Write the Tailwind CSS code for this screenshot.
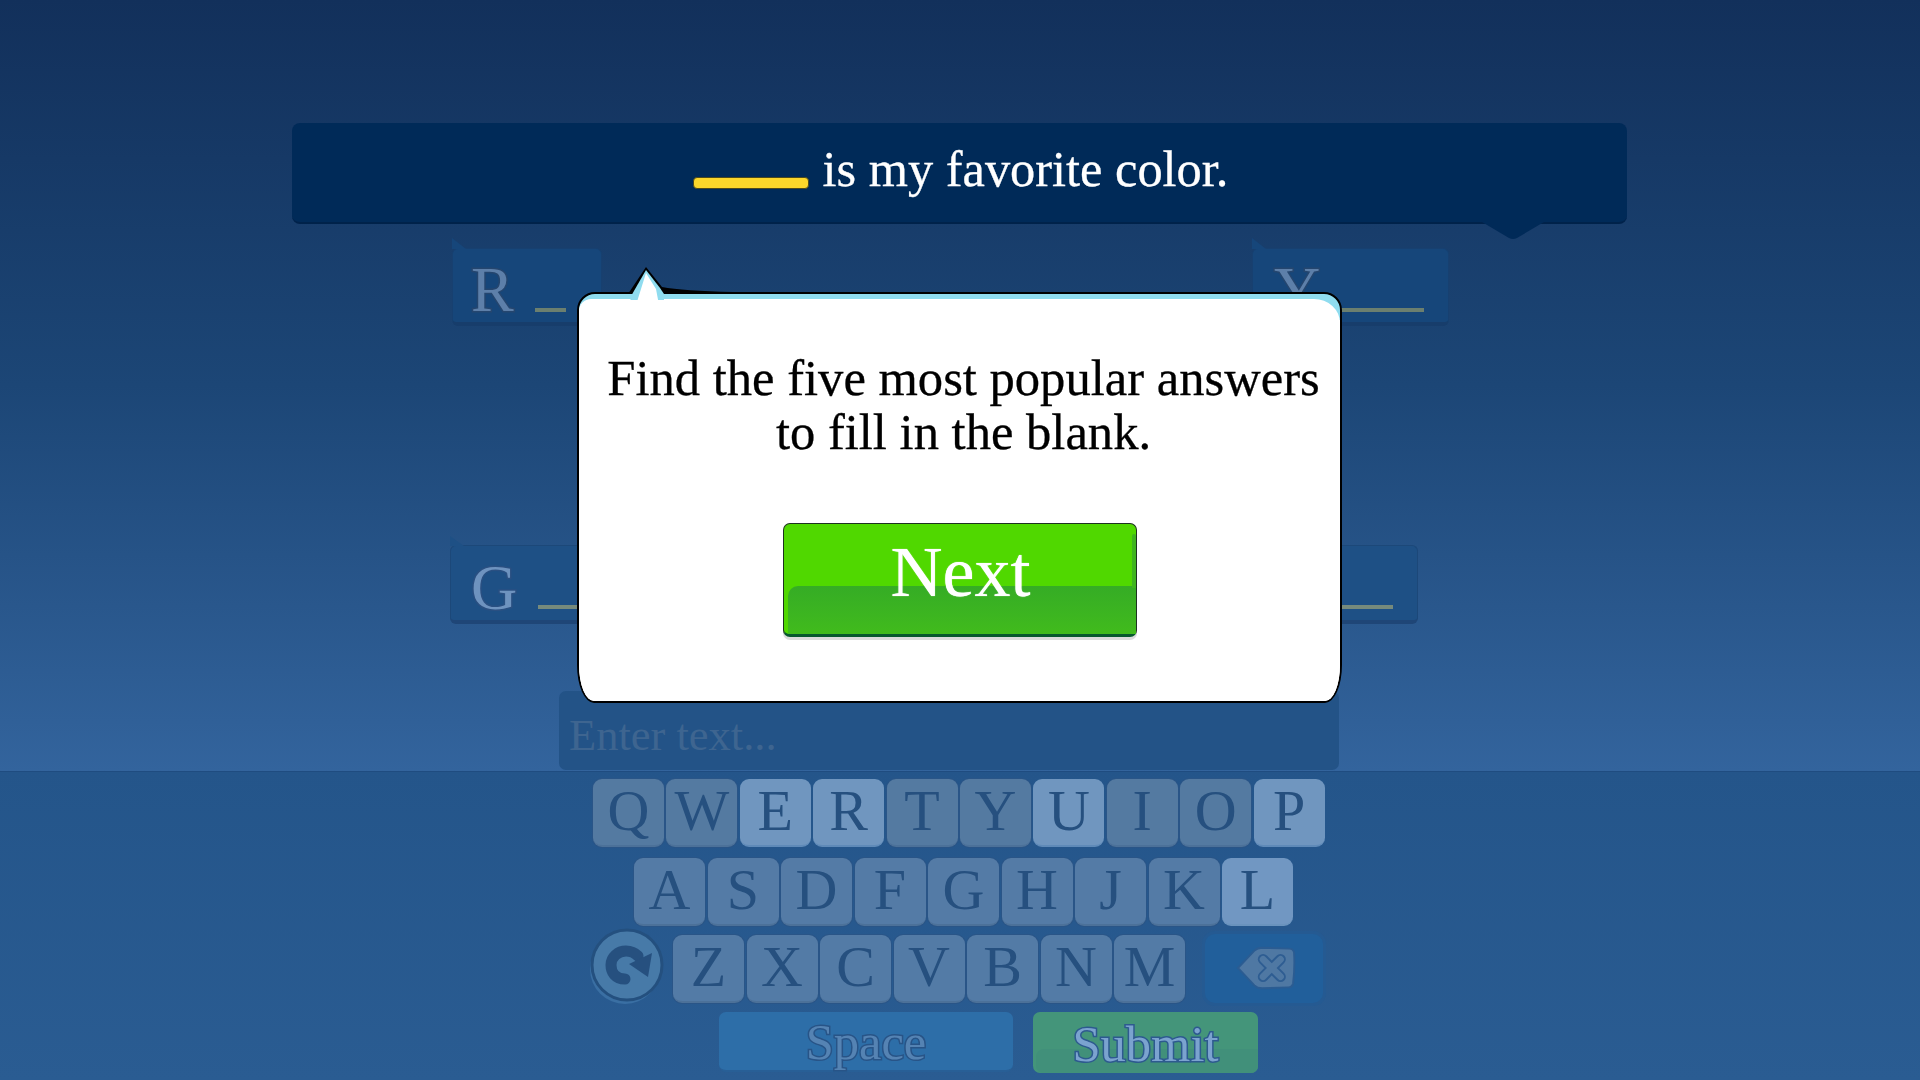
<!DOCTYPE html>
<html lang="en">
<head>
    <meta charset="UTF-8">
    <title>Fill in the blank</title>
    <script src="https://cdn.jsdelivr.net/npm/@tailwindcss/browser@4"></script>
</head>
<body class="relative h-[1080px] w-[1920px] overflow-hidden bg-[#24558a] font-['Liberation_Serif',serif]">
    <!-- play area -->
    <div class="h-[771px] bg-linear-to-b from-[#12305b] via-[#1c4676] via-50% to-[#33649d] pt-[123px]">
        <!-- question bar -->
        <div class="relative ml-[292px] flex h-[101px] w-[1335px] justify-center rounded-[8px] border-b-2 border-[#00224a] bg-[#002a58] pt-[16px] pl-[2px]">
            <div class="mt-[38px] mr-[14px] h-[12px] w-[116px] rounded-[4px] border border-[#4d4a1c] bg-[#fbd72b]"></div>
            <div class="text-[50.4px] leading-[60px] text-white [-webkit-text-stroke:0.3px_#fff]">is my favorite color.</div>
            <svg class="absolute top-[99px] left-[1190px]" width="62" height="18" viewBox="0 0 62 18"><path d="M0 0H62L35 16Q31 18 27 16Z" fill="#002a58"/></svg>
        </div>

        <!-- answers, row 1 -->
        <div class="mt-[24px] grid grid-cols-[800px_197px] pl-[452px]">
            <div class="relative flex h-[78px] w-[150px] rounded-[6px] border border-b-4 border-[#174070] border-b-[#173d6b] bg-[#16467a] pt-[9px] pl-[18px]">
                <div class="absolute -top-[11px] -left-px h-[11px] w-[14px] bg-[#16467a] [clip-path:polygon(0_0,100%_100%,0_100%)]"></div>
                <span class="text-[64px] leading-[64px] text-[#5d7fa9] [-webkit-text-stroke:3px_#25466f] [paint-order:stroke_fill]">R</span>
                <div class="mt-[50px] ml-[21px] h-[4px] w-[31px] bg-[#6b7f6f]"></div>
            </div>
            <div class="relative flex h-[78px] w-[197px] rounded-[6px] border border-b-4 border-[#174070] border-b-[#173d6b] bg-[#16467a] pt-[9px] pl-[21px]">
                <div class="absolute -top-[11px] -left-px h-[11px] w-[14px] bg-[#16467a] [clip-path:polygon(0_0,100%_100%,0_100%)]"></div>
                <span class="text-[64px] leading-[64px] text-[#5d7fa9] [-webkit-text-stroke:3px_#25466f] [paint-order:stroke_fill]">Y</span>
                <div class="mt-[50px] ml-[18px] h-[4px] w-[86px] bg-[#6b7f6f]"></div>
            </div>
        </div>

        <!-- answers, row 2 -->
        <div class="mt-[219px] flex pl-[450px]">
            <div class="relative flex h-[79px] w-[200px] rounded-[6px] border border-b-4 border-[#1c4879] border-b-[#1f4677] bg-[#1e5085] pt-[10px] pl-[20px]">
                <div class="absolute -top-[10px] -left-px h-[10px] w-[14px] bg-[#1e5085] [clip-path:polygon(0_0,100%_100%,0_100%)]"></div>
                <span class="text-[64px] leading-[64px] text-[#6e93bf] [-webkit-text-stroke:3px_#2a5082] [paint-order:stroke_fill]">G</span>
                <div class="mt-[49px] ml-[21px] h-[4px] w-[60px] bg-[#768a7c]"></div>
            </div>
            <div class="ml-[568px] flex h-[79px] w-[200px] justify-end rounded-[6px] border border-b-4 border-[#1c4879] border-b-[#1f4677] bg-[#1e5085] pt-[59px] pr-[24px]">
                <div class="h-[4px] w-[100px] bg-[#768a7c]"></div>
            </div>
        </div>

        <!-- text input -->
        <div class="mt-[67px] ml-[559px] flex h-[79px] w-[780px] items-center rounded-[7px] bg-[#235387] pt-[10px] pl-[10px] text-[44.5px] text-[#3e6590]">Enter text...</div>
    </div>

    <!-- keyboard -->
    <div class="h-[309px] border-t border-[#1f4c80] bg-linear-to-b from-[#24558a] to-[#2a5c92] pt-[7px]">
        <div class="flex gap-[2.4px] pl-[593px] text-[58px] text-[#26507f]">
            <div class="flex h-[68px] w-[71px] items-center justify-center rounded-[9px] border-b-2 border-[#4c7199] bg-[#547aa1] pb-[3px] shadow-[0_0_0_1px_#2a5587]">Q</div>
            <div class="flex h-[68px] w-[71px] items-center justify-center rounded-[9px] border-b-2 border-[#4c7199] bg-[#547aa1] pb-[3px] shadow-[0_0_0_1px_#2a5587]">W</div>
            <div class="flex h-[68px] w-[71px] items-center justify-center rounded-[9px] border-b-2 border-[#5f8ab8] bg-[#7096bf] pb-[3px]">E</div>
            <div class="flex h-[68px] w-[71px] items-center justify-center rounded-[9px] border-b-2 border-[#5f8ab8] bg-[#7096bf] pb-[3px]">R</div>
            <div class="flex h-[68px] w-[71px] items-center justify-center rounded-[9px] border-b-2 border-[#4c7199] bg-[#547aa1] pb-[3px] shadow-[0_0_0_1px_#2a5587]">T</div>
            <div class="flex h-[68px] w-[71px] items-center justify-center rounded-[9px] border-b-2 border-[#4c7199] bg-[#547aa1] pb-[3px] shadow-[0_0_0_1px_#2a5587]">Y</div>
            <div class="flex h-[68px] w-[71px] items-center justify-center rounded-[9px] border-b-2 border-[#5f8ab8] bg-[#7096bf] pb-[3px]">U</div>
            <div class="flex h-[68px] w-[71px] items-center justify-center rounded-[9px] border-b-2 border-[#4c7199] bg-[#547aa1] pb-[3px] shadow-[0_0_0_1px_#2a5587]">I</div>
            <div class="flex h-[68px] w-[71px] items-center justify-center rounded-[9px] border-b-2 border-[#4c7199] bg-[#547aa1] pb-[3px] shadow-[0_0_0_1px_#2a5587]">O</div>
            <div class="flex h-[68px] w-[71px] items-center justify-center rounded-[9px] border-b-2 border-[#5f8ab8] bg-[#7096bf] pb-[3px]">P</div>
        </div>
        <div class="mt-[11px] flex gap-[2.5px] pl-[634px] text-[58px] text-[#26507f]">
            <div class="flex h-[68px] w-[71px] items-center justify-center rounded-[9px] border-b-2 border-[#4c7199] bg-[#547ba6] pb-[3px] shadow-[0_0_0_1px_#2a5587]">A</div>
            <div class="flex h-[68px] w-[71px] items-center justify-center rounded-[9px] border-b-2 border-[#4c7199] bg-[#547ba6] pb-[3px] shadow-[0_0_0_1px_#2a5587]">S</div>
            <div class="flex h-[68px] w-[71px] items-center justify-center rounded-[9px] border-b-2 border-[#4c7199] bg-[#547ba6] pb-[3px] shadow-[0_0_0_1px_#2a5587]">D</div>
            <div class="flex h-[68px] w-[71px] items-center justify-center rounded-[9px] border-b-2 border-[#4c7199] bg-[#547ba6] pb-[3px] shadow-[0_0_0_1px_#2a5587]">F</div>
            <div class="flex h-[68px] w-[71px] items-center justify-center rounded-[9px] border-b-2 border-[#4c7199] bg-[#547ba6] pb-[3px] shadow-[0_0_0_1px_#2a5587]">G</div>
            <div class="flex h-[68px] w-[71px] items-center justify-center rounded-[9px] border-b-2 border-[#4c7199] bg-[#547ba6] pb-[3px] shadow-[0_0_0_1px_#2a5587]">H</div>
            <div class="flex h-[68px] w-[71px] items-center justify-center rounded-[9px] border-b-2 border-[#4c7199] bg-[#547ba6] pb-[3px] shadow-[0_0_0_1px_#2a5587]">J</div>
            <div class="flex h-[68px] w-[71px] items-center justify-center rounded-[9px] border-b-2 border-[#4c7199] bg-[#547ba6] pb-[3px] shadow-[0_0_0_1px_#2a5587]">K</div>
            <div class="flex h-[68px] w-[71px] items-center justify-center rounded-[9px] border-b-2 border-[#6a93bd] bg-[#7197c2] pb-[3px]">L</div>
        </div>
        <div class="mt-[9px] flex h-[68px] items-center pl-[588px] text-[58px] text-[#26507f]">
            <!-- refresh -->
            <svg class="mr-[7px] -mt-[8px] -mb-[2px] shrink-0" width="78" height="78" viewBox="0 0 78 78">
                <circle cx="37" cy="42" r="35" fill="#3a6fa3"/>
                <circle cx="39" cy="38" r="35" fill="#477aa8" stroke="#24507f" stroke-width="3"/>
                <path d="M37 52C27 52 23 45 23 38C23 30 30 24 38 24C43 24 47 26 50 29" fill="none" stroke="#26507f" stroke-width="11" stroke-linecap="round"/>
                <path d="M41 37L64 26L60 50Z" fill="#26507f"/>
            </svg>
            <div class="flex gap-[2.5px]">
                <div class="flex h-[68px] w-[71px] items-center justify-center rounded-[9px] border-b-2 border-[#4c7199] bg-[#537ba6] pb-[3px] shadow-[0_0_0_1px_#2a5587]">Z</div>
                <div class="flex h-[68px] w-[71px] items-center justify-center rounded-[9px] border-b-2 border-[#4c7199] bg-[#537ba6] pb-[3px] shadow-[0_0_0_1px_#2a5587]">X</div>
                <div class="flex h-[68px] w-[71px] items-center justify-center rounded-[9px] border-b-2 border-[#4c7199] bg-[#537ba6] pb-[3px] shadow-[0_0_0_1px_#2a5587]">C</div>
                <div class="flex h-[68px] w-[71px] items-center justify-center rounded-[9px] border-b-2 border-[#4c7199] bg-[#537ba6] pb-[3px] shadow-[0_0_0_1px_#2a5587]">V</div>
                <div class="flex h-[68px] w-[71px] items-center justify-center rounded-[9px] border-b-2 border-[#4c7199] bg-[#537ba6] pb-[3px] shadow-[0_0_0_1px_#2a5587]">B</div>
                <div class="flex h-[68px] w-[71px] items-center justify-center rounded-[9px] border-b-2 border-[#4c7199] bg-[#537ba6] pb-[3px] shadow-[0_0_0_1px_#2a5587]">N</div>
                <div class="flex h-[68px] w-[71px] items-center justify-center rounded-[9px] border-b-2 border-[#4c7199] bg-[#537ba6] pb-[3px] shadow-[0_0_0_1px_#2a5587]">M</div>
            </div>
            <!-- backspace -->
            <div class="ml-[20px] -mt-[2px] flex h-[69px] w-[118px] items-center justify-center rounded-[10px] bg-[#215f9b] pl-[3px] shadow-[0_0_0_3px_#255a92]">
                <svg width="60" height="46" viewBox="0 0 62 46">
                    <path d="M2 23L19 5Q22 2 27 2L55 3Q59 3 60 7Q61 23 59 39Q58 43 54 43L27 44Q22 44 19 41Z" fill="#4f78a3" stroke="#2b5c92" stroke-width="2"/>
                    <path d="M28 14L46 32M46 14L28 32" stroke="#2e5d92" stroke-width="11" stroke-linecap="round"/>
                    <path d="M28 14L46 32M46 14L28 32" stroke="#4f78a3" stroke-width="7" stroke-linecap="round"/>
                </svg>
            </div>
        </div>
        <div class="mt-[9px] flex pl-[719px] text-[50.5px]">
            <div class="flex h-[60px] w-[294px] items-center justify-center rounded-[7px] border-b-2 border-[#285f96] bg-[#2d6ea8] pt-[4px] text-[#5583b3] [-webkit-text-stroke:3px_#285487] [paint-order:stroke_fill]">Space</div>
            <div class="relative ml-[20px] flex h-[61px] w-[225px] items-center justify-center rounded-[7px] bg-[#44957a] pt-[4px] text-[#7ba3cf] [-webkit-text-stroke:3px_#2d5a8f] [paint-order:stroke_fill]">
                <div class="absolute right-0 bottom-0 left-[3px] h-[24px] rounded-tl-[8px] rounded-b-[7px] bg-[#41907a]"></div>
                <span class="relative">Submit</span>
            </div>
        </div>
    </div>

    <!-- instructions popup -->
    <div class="absolute top-[292px] left-[577px] h-[411px] w-[765px] rounded-t-[18px] rounded-b-[17px_38px] border-2 border-black bg-linear-to-b from-[#8fdcef] from-[26px] to-white to-[26px]">
        <div class="mt-[5px] flex h-[402px] flex-col items-center rounded-tl-[12px] rounded-tr-[26px_24px] rounded-b-[15px_36px] bg-white pt-[52px]">
            <div class="w-full pl-[8px] text-center text-[50.6px] leading-[54px] text-black [-webkit-text-stroke:0.3px_#000]">Find the five most popular answers<br>to fill in the blank.</div>
            <!-- next button -->
            <div class="relative mt-[64px] flex h-[114px] w-[354px] shrink-0 justify-center rounded-[7px] border border-b-[3px] border-[#1d3320] border-b-[#07582e] bg-[#50d800] pt-[7px] pl-[2px] shadow-[0_3px_0_#dcdcdc]">
                <div class="absolute top-[62px] right-0 bottom-0 left-[4px] rounded-tl-[10px] bg-linear-to-b from-[#35ac25] to-[#41bb1c]"></div>
                <div class="absolute top-[10px] right-0 h-[54px] w-[4px] rounded-t-[4px] bg-[#3fb51f]"></div>
                <span class="relative text-[72px] leading-[82px] text-white [text-shadow:0_0_1px_#fff]">Next</span>
            </div>
        </div>
        <!-- speech tail -->
        <svg class="absolute -top-[27px] left-[49px]" width="110" height="38" viewBox="0 0 110 38">
            <path d="M0 27L18 0L34 20Q55 24 105 25V27H0Z" fill="#000"/>
            <path d="M2.5 30L18 3L32 21L36 27V33H2.5Z" fill="#8fdcef"/>
            <path d="M8 38L18 6L28 22L31 38Z" fill="#fff"/>
        </svg>
    </div>
</body>
</html>
